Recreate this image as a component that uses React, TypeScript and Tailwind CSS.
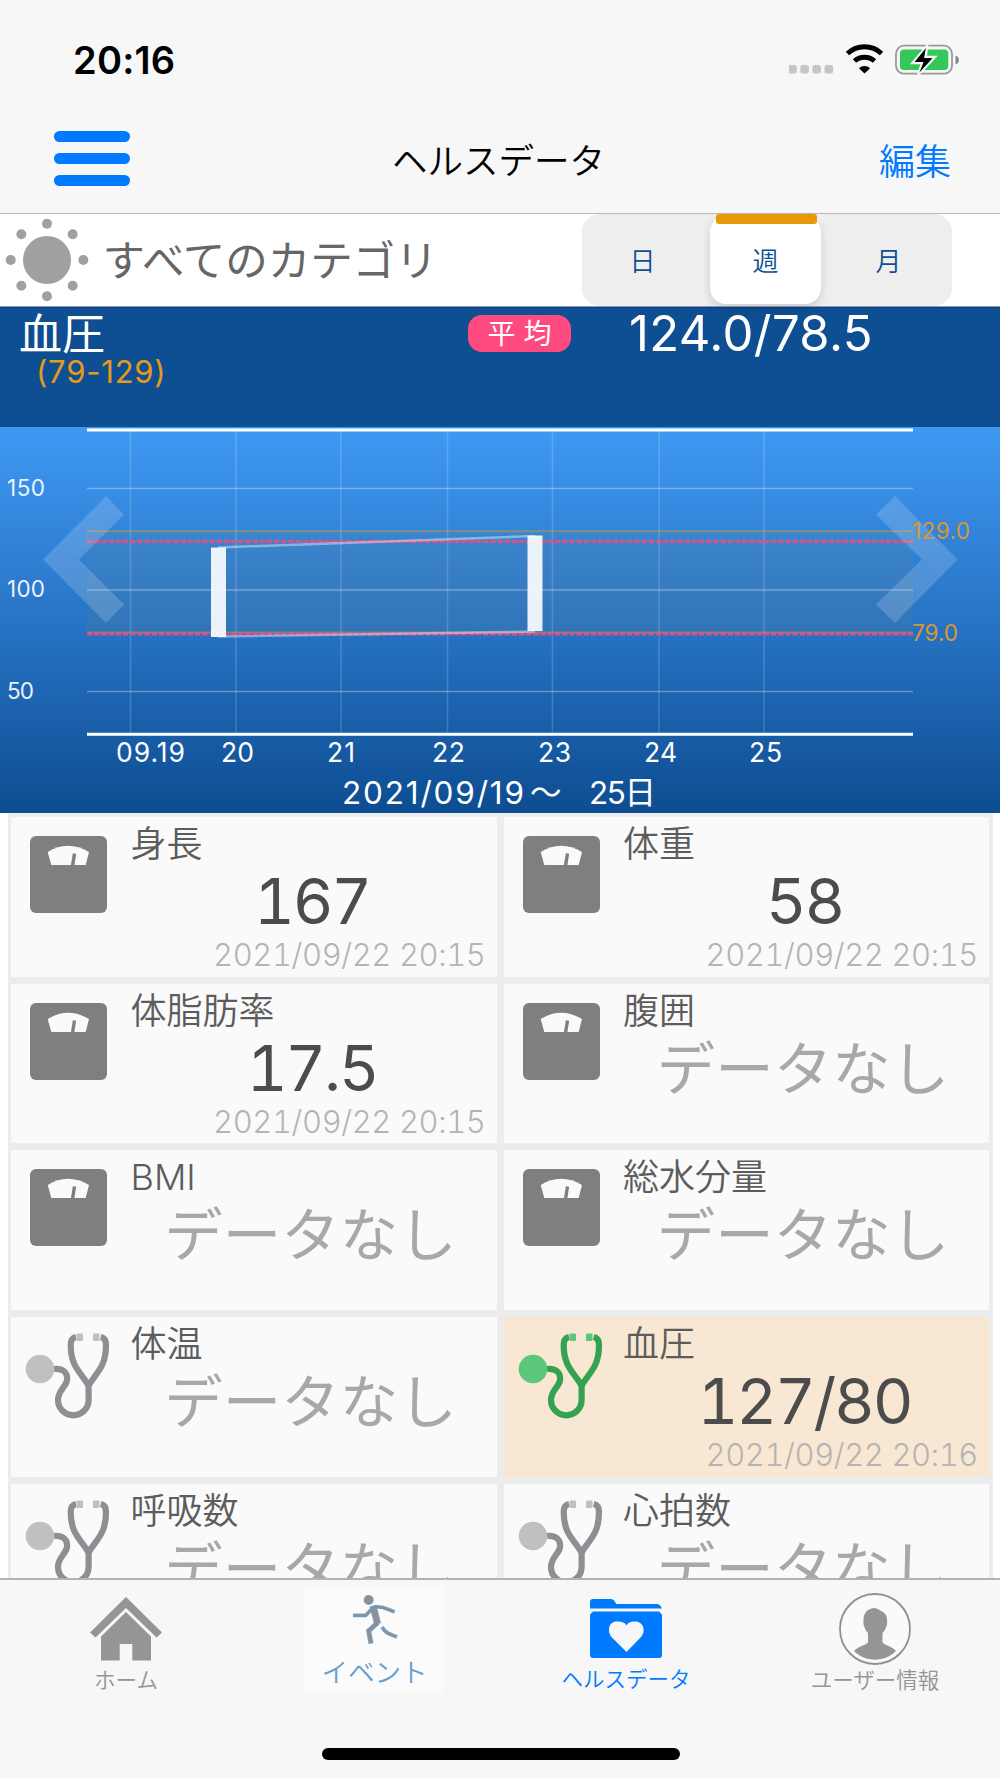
import { useState } from 'react'
import clsx from 'clsx'

type Metric = {
  name: string
  icon: 'scale' | 'stethoscope'
  value?: string
  date?: string
}

const METRICS: Metric[] = [
  { name: '身長', icon: 'scale', value: '167', date: '2021/09/22 20:15' },
  { name: '体重', icon: 'scale', value: '58', date: '2021/09/22 20:15' },
  { name: '体脂肪率', icon: 'scale', value: '17.5', date: '2021/09/22 20:15' },
  { name: '腹囲', icon: 'scale' },
  { name: 'BMI', icon: 'scale' },
  { name: '総水分量', icon: 'scale' },
  { name: '体温', icon: 'stethoscope' },
  { name: '血圧', icon: 'stethoscope', value: '127/80', date: '2021/09/22 20:16' },
  { name: '呼吸数', icon: 'stethoscope' },
  { name: '心拍数', icon: 'stethoscope' },
]

const DAYS = [
  { x: 130.5, label: '09.19', labelX: 117, w: 67 },
  { x: 236, label: '20', labelX: 222, w: 31 },
  { x: 341, label: '21', labelX: 328, w: 26 },
  { x: 447.5, label: '22', labelX: 433, w: 31 },
  { x: 552.5, label: '23', labelX: 539, w: 31 },
  { x: 659, label: '24', labelX: 645, w: 31 },
  { x: 764, label: '25', labelX: 750, w: 31 },
]

function StatusBar() {
  return (
    <div className="flex h-[106px] items-center justify-between pt-[14px] pr-[40px] pl-[73px]">
      <span className="text-[38px] leading-10 font-semibold tracking-[0.2px]">20:16</span>
      <svg width="171" height="32" viewBox="0 0 171 32">
        {[0, 12.1, 24.2, 36.3].map((x) => (
          <rect key={x} x={x - 0.8} y="21" width="8.6" height="8.6" rx="2.5" fill="#c5c5c5" />
        ))}
        <g fill="none" stroke="#000">
          <path d="M58.5 9.5a25 25 0 0 1 34 0" strokeWidth="5" />
          <path d="M65.5 17a15 15 0 0 1 20 0" strokeWidth="5" />
        </g>
        <path d="M75.5 29.4l-5.6-5.2a8.5 8.5 0 0 1 11.2 0z" />
        <rect x="107" y="1.7" width="56" height="28" rx="8" fill="none" stroke="#999" strokeWidth="1.8" />
        <rect x="111" y="5.5" width="48.3" height="20.6" rx="4" fill="#34c759" />
        <path d="M166.5 11.5c4.6 1.4 4.6 7.4 0 8.8z" fill="#888" />
        <path d="M138 2l-14.4 17h9.6l-4 11.5 16.6-17.5h-9.2z" fill="#000" stroke="#f7f7f7" strokeWidth="2.6" />
        <path d="M137 4l-11.4 14h9l-4.2 10.5L143.5 14.2h-9z" />
      </svg>
    </div>
  )
}

function NavBar() {
  return (
    <div className="flex h-[107px] items-center justify-between pr-[49px] pl-[54px]">
      <div className="mb-[2px] flex w-[76px] flex-col gap-[10.8px]">
        <div className="h-[11px] rounded-full bg-[#007aff]" />
        <div className="h-[11px] rounded-full bg-[#007aff]" />
        <div className="h-[11px] rounded-full bg-[#007aff]" />
      </div>
      <h1 className="mt-[4px] mr-[12px] text-[35.5px] leading-10">ヘルスデータ</h1>
      <button className="mt-[4px] text-[36px] leading-10 text-[#007aff]">編集</button>
    </div>
  )
}

function SunIcon() {
  return (
    <svg width="84" height="84" viewBox="-42 -42 84 84" fill="#a0a0a0">
      <circle r="24" />
      {[0, 45, 90, 135, 180, 225, 270, 315].map((a) => (
        <circle key={a} cx="36.3" r="5" transform={`rotate(${a})`} />
      ))}
    </svg>
  )
}

function ScaleIcon() {
  return (
    <svg width="77" height="77" viewBox="0 0 77 77">
      <rect width="77" height="77" rx="6" fill="#7f7f7f" />
      <path d="M17.7 16Q38 3.5 59 16L55.7 29H21.3z" fill="#fafafa" />
      <path d="M44.5 17.5L42.6 29.5" stroke="#7f7f7f" strokeWidth="3.4" />
    </svg>
  )
}

function StethoscopeIcon({ active }: { active: boolean }) {
  const tube = active ? '#33a352' : '#8e8e93'
  const tip = active ? '#5ac878' : '#c0c0c3'
  return (
    <svg width="77" height="77" viewBox="0 0 77 77" className="overflow-visible">
      <g fill="none" stroke={tube} strokeWidth="6.2">
        <path d="M24 33c8-1 14 3 13 11-.8 7-9 10-9 20a15.3 15.3 0 0 0 30.6 0V47" />
        <path d="M46 1c-4.5 1-5.300 4-5.300 8 0 22 10 27 17.900 40.500C66.500 36.200 76 31.200 76 9c0-4-.8-7-5.300-8" />
      </g>
      <circle cx="10" cy="33" r="14.3" fill={tip} />
      <rect x="46.500" y="-2.5" width="6.500" height="7.5" rx="1" fill={tip} />
      <rect x="63" y="-2.5" width="6.500" height="7.5" rx="1" fill={tip} />
    </svg>
  )
}

function FilterRow() {
  const [range, setRange] = useState('週')

  return (
    <div className="flex h-[93px] items-center justify-between border-t border-[#b9b9b9] bg-white pr-[48px] pl-[4.5px]">
      <div className="flex items-center gap-[14px]">
        <SunIcon />
        <span className="mt-[2px] text-[42.5px] leading-12 font-normal text-[#666]">すべてのカテゴリ</span>
      </div>
      <div className="flex h-[92px] w-[370px] justify-between rounded-[18px] bg-[#eee] pr-[8px] pl-[5px] text-[26px] text-[#0e4f93]">
        {['日', '週', '月'].map((label) => (
          <button
            key={label}
            onClick={() => setRange(label)}
            className={clsx(
              'relative my-[2px] w-[111px] pt-1 leading-none',
              range === label && 'rounded-[16px] bg-white shadow-[0_4px_10px_rgba(0,0,0,0.14)]',
            )}
          >
            {range === label && (
              <span className="absolute -top-[2px] left-[6px] h-[10px] w-[101px] rounded-[3px] bg-[#e69a05]" />
            )}
            {label}
          </button>
        ))}
      </div>
    </div>
  )
}

function Summary() {
  return (
    <div className="flex h-[119px] bg-[#0e4f93] pt-[3px] pl-5 font-normal text-white">
      <div className="w-[448px]">
        <div className="-ml-px text-[43px] leading-[46px]">血圧</div>
        <div className="pl-[16px] text-[31px] leading-[30px] tracking-[0.8px] text-[#e69a17]">(79-129)</div>
      </div>
      <div className="mt-1 flex h-[37px] w-[103px] items-center justify-center rounded-[14px] bg-[#ff4a80] text-[28px] leading-none">
        平 均
      </div>
      <div className="ml-[58px] text-[49px] leading-[45px] tracking-[0.4px]">124.0/78.5</div>
    </div>
  )
}

function Chart() {
  return (
    <svg width="1000" height="386" viewBox="0 427 1000 386" className="block font-normal">
      <defs>
        <linearGradient id="sky" x1="0" y1="0" x2="0" y2="1">
          <stop offset="0" stopColor="#3f99f3" />
          <stop offset="0.5" stopColor="#2874c6" />
          <stop offset="1" stopColor="#0d4d91" />
        </linearGradient>
      </defs>
      <rect y="427" width="1000" height="386" fill="url(#sky)" />

      {/* target range */}
      <rect x="87" y="531" width="826" height="102.5" fill="#a09050" fillOpacity="0.09" />
      <path d="M87 531.3H913M87 632.5H913" stroke="#a09560" strokeOpacity="0.65" strokeWidth="2" />

      {/* grid */}
      <g stroke="#fff" strokeOpacity="0.16" strokeWidth="1.6">
        {DAYS.map((d) => (
          <line key={d.label} x1={d.x} x2={d.x} y1="431" y2="733" />
        ))}
      </g>
      <path d="M87 488.5H913M87 590H913M87 691.5H913" stroke="#fff" strokeOpacity="0.3" strokeWidth="1.7" />
      <path d="M87 430H913M87 734.3H913" stroke="#fff" strokeWidth="3" />

      <path d="M87 541.5H913M87 634H913" stroke="#f8487d" strokeOpacity="0.9" strokeWidth="3" strokeDasharray="5.2 2" />

      <path d="M218 547.5L535 536M218 636.5L535 631.5" stroke="#fff" strokeOpacity="0.4" strokeWidth="2.5" />
      <rect x="211" y="547.5" width="15" height="89.5" fill="#fff" fillOpacity="0.9" />
      <rect x="527.5" y="535.5" width="15" height="95.5" fill="#fff" fillOpacity="0.9" />

      <g fill="#fff" fillOpacity="0.17">
        <path d="M43 559.5L106 496l18 18.5-45 45 45 45L106 623z" />
        <path d="M957.5 559.5L895 496l-19 18.5 46 45-46 45L895 623z" />
      </g>

      <g fill="#eaf2fb" fontSize="22.5">
        <text x="7" y="495.5" textLength="38">150</text>
        <text x="7" y="597" textLength="38">100</text>
        <text x="7" y="698.5" textLength="27">50</text>
      </g>
      <g fill="#d9982f" fontSize="22.5">
        <text x="912" y="539" textLength="58">129.0</text>
        <text x="912" y="640.5" textLength="46">79.0</text>
      </g>
      <g fill="#fff" fontSize="26.5">
        {DAYS.map((d) => (
          <text key={d.label} x={d.labelX - 1} y="762" textLength={d.w + 2}>
            {d.label}
          </text>
        ))}
      </g>
      <g fill="#fff" fontSize="31.5">
        <text x="342" y="803.5" textLength="182">2021/09/19</text>
        <text x="530" y="803.5">〜</text>
        <text x="589" y="803.5" textLength="67">25日</text>
      </g>
    </svg>
  )
}

function MetricCard({ metric, active }: { metric: Metric; active: boolean }) {
  return (
    <div className={clsx('flex h-[159.7px] pl-[19px]', active ? 'bg-[#f8e7d2]' : 'bg-[#fafafa]')}>
      <div className="mt-[19px] w-[77px] shrink-0">
        {metric.icon === 'scale' ? <ScaleIcon /> : <StethoscopeIcon active={active} />}
      </div>
      <div className="ml-[23.5px] flex-1 pt-[9px]">
        <div className="text-[36px] leading-9 text-[#5c5c5c]">{metric.name}</div>
        {metric.value ? (
          <>
            <div className="mt-[6px] pr-[3px] text-center text-[63px] leading-[66px] font-normal tracking-[-2.2px] text-[#4c4c4c]">
              {metric.value}
            </div>
            <div className="mt-[5px] pr-[11px] text-right text-[31px] leading-8 tracking-[-0.4px] text-[#b4b4b4]">
              {metric.date}
            </div>
          </>
        ) : (
          <div className="mt-[7px] pr-[6px] text-center text-[58.5px] leading-[66px] font-normal text-[#a8a8a8]">
            データなし
          </div>
        )}
      </div>
    </div>
  )
}

function HomeIcon() {
  return (
    <svg width="72" height="64" viewBox="0 0 72 64" fill="#959595">
      <path d="M36 0L72 35.5l-5.5 5L36 11 5.5 40.5 0 35.5z" />
      <path d="M36 15l25 24.5V63.5H42.3V47H29.7v16.5H11V39.5z" />
    </svg>
  )
}

function RunnerIcon() {
  return (
    <svg width="50" height="54" viewBox="1051 64 150 162" fill="none">
      <g stroke="#62a9e6">
        <path d="M1060 134H1098L1120 111M1122 109C1145 106 1155 112 1185 124" strokeWidth="11" />
        <path d="M1120 105L1134 160" strokeWidth="21" />
        <path d="M1134 156L1107 181L1114 219" strokeWidth="15" />
        <path d="M1147 169C1158 188 1170 190 1192 199" strokeWidth="11" />
        <circle cx="1107" cy="88" r="15" fill="#62a9e6" stroke="none" />
      </g>
      <g stroke="#909090">
        <path d="M1063 134H1098L1120 111M1122 110C1145 107 1155 113 1182 123" strokeWidth="7" />
        <path d="M1120 107L1133 158" strokeWidth="17" />
        <path d="M1134 156L1107 181L1114 217" strokeWidth="10" />
        <path d="M1148 172C1158 188 1170 190 1190 198" strokeWidth="7" />
        <circle cx="1107" cy="88" r="12.5" fill="#909090" stroke="none" />
      </g>
    </svg>
  )
}

function FolderHeartIcon() {
  return (
    <svg width="72" height="60" viewBox="0 0 72 60" fill="#007aff">
      <path d="M0 9.5V3q0-3 3-3H21q2 0 3 1.5L26.5 5H67q2 0 3.500 2L72 9.500z" />
      <path d="M3 12.5H69l3 3V56q0 3-3 3H3q-3 0-3-3V15.5z" />
      <path
        d="M36.5 53L22 38.5C17 33 18 22.5 27 22.5c5 0 8 1 9.5 4 1.500-3 4-4 8.500-4 9 0 11 10 6 15.500z"
        fill="#f7f7f7"
      />
    </svg>
  )
}

function UserIcon() {
  return (
    <svg width="74" height="74" viewBox="0 0 74 74">
      <circle cx="37" cy="37" r="35" fill="#fafafa" stroke="#909090" strokeWidth="1.8" />
      <path
        d="M37 16c7 3 12 5 12 11.5 0 3 .5 4-.5 6.500-1 3-2 5-4 7v9.500c3 3 9 3.500 13.500 8.500-11 11.500-31 11.500-42 0C20.500 54 27 53.500 30 50.500V41c-2-2-3-4-4-7-1-2.500-.5-3.500-.5-6.500C25.500 21 30 16 37 16z"
        fill="#959595"
      />
    </svg>
  )
}

function TabBar() {
  return (
    <nav className="h-[200px] border-t-2 border-[#b2b2b2] bg-[#f7f7f7]">
      <div className="grid h-[168px] grid-cols-4 text-[21.5px] leading-6 text-[#959595]">
        <div className="flex flex-col items-center pt-[17px] pl-[2px]">
          <HomeIcon />
          <span className="mt-[7px]">ホーム</span>
        </div>
        <div className="flex flex-col items-center pt-[6px] pr-[3px]">
          <div className="flex h-[107px] w-[139px] flex-col items-center bg-[#fbfbfb] pt-[6px] pl-[2px] text-[#659fd3]">
            <RunnerIcon />
            <span className="mt-[14px] text-[26.5px]">イベント</span>
          </div>
        </div>
        <div className="flex flex-col items-center pt-[19px] pl-[2px] text-[#007aff]">
          <FolderHeartIcon />
          <span className="mt-[8px]">ヘルスデータ</span>
        </div>
        <div className="flex flex-col items-center pt-[12px]">
          <UserIcon />
          <span className="mt-[2px]">ユーザー情報</span>
        </div>
      </div>
      <div className="ml-[322px] h-3 w-[358px] rounded-full bg-black" />
    </nav>
  )
}

export default function App() {
  return (
    <div className="flex h-[1778px] w-[1000px] flex-col overflow-hidden bg-[#f7f7f7] [font-family:'Inter','Noto_Sans_CJK_JP',sans-serif] [font-weight:350] text-black">
      <StatusBar />
      <NavBar />
      <FilterRow />
      <div className="h-[2px] border-t border-[#8c9db8] bg-[#0e3f83]" />
      <Summary />
      <Chart />
      <main className="min-h-0 flex-1 overflow-hidden bg-white pr-[7px] pl-2 tabular-nums">
        <div className="grid grid-cols-2 gap-[7px] bg-[#ececec] pt-1 pr-1 pl-[3px]">
          {METRICS.map((m) => (
            <MetricCard key={m.name} metric={m} active={m.name === '血圧'} />
          ))}
        </div>
      </main>
      <TabBar />
    </div>
  )
}
